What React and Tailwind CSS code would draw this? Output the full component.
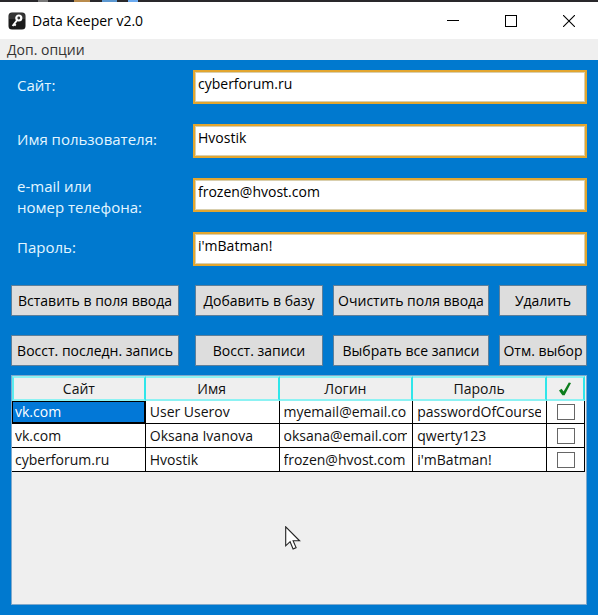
import { useState } from "react";

const fields = [
  { id: "site", label: ["Сайт:"], value: "cyberforum.ru" },
  { id: "user", label: ["Имя пользователя:"], value: "Hvostik" },
  { id: "contact", label: ["e-mail или", "номер телефона:"], value: "frozen@hvost.com" },
  { id: "password", label: ["Пароль:"], value: "i'mBatman!" },
];

const buttons = [
  "Вставить в поля ввода",
  "Добавить в базу",
  "Очистить поля ввода",
  "Удалить",
  "Восст. последн. запись",
  "Восст. записи",
  "Выбрать все записи",
  "Отм. выбор",
];

const rows = [
  ["vk.com", "User Userov", "myemail@email.com", "passwordOfCourse"],
  ["vk.com", "Oksana Ivanova", "oksana@email.com", "qwerty123"],
  ["cyberforum.ru", "Hvostik", "frozen@hvost.com", "i'mBatman!"],
];

function KeyLogo() {
  return (
    <svg className="size-[18px]" viewBox="0 0 18 18" aria-hidden="true">
      <rect x="0.5" y="0.5" width="17" height="17" rx="3.5" fill="#1b1b1b" />
      <path d="M1 4a3 3 0 0 1 3-3h10a3 3 0 0 1 3 3v3H1z" fill="#353535" />
      <circle cx="10.8" cy="6" r="2.5" fill="none" stroke="#fff" strokeWidth="2.2" />
      <path d="M9.2 8 4.6 14M5.4 11.6l2.4 1.9" fill="none" stroke="#fff" strokeWidth="2" />
    </svg>
  );
}

function TitleBar() {
  return (
    <header className="flex h-[37px] items-center bg-white pl-2 text-black">
      <KeyLogo />
      <h1 className="ml-[6px] flex-1 text-sm">Data Keeper v2.0</h1>
      <button type="button" aria-label="Свернуть" className="flex w-[58px] justify-center">
        <svg className="size-3" viewBox="0 0 12 12" shapeRendering="crispEdges">
          <path d="M0 5.5h12" stroke="#000" />
        </svg>
      </button>
      <button type="button" aria-label="Развернуть" className="flex w-[58px] justify-center">
        <svg className="size-3" viewBox="0 0 12 12" shapeRendering="crispEdges">
          <rect x="0.5" y="0.5" width="11" height="11" fill="none" stroke="#000" />
        </svg>
      </button>
      <button type="button" aria-label="Закрыть" className="flex w-[58px] justify-center">
        <svg className="size-3" viewBox="0 0 12 12">
          <path d="M0 0l12 12M12 0 0 12" stroke="#000" strokeWidth="1.1" />
        </svg>
      </button>
    </header>
  );
}

function Field({ id, label, value }) {
  return (
    <div className="flex h-[34px] items-center">
      <label
        htmlFor={id}
        className={
          label.length > 1
            ? "w-[182px] shrink-0 pl-[6px] pt-1 text-[15px] leading-[21px] text-[#e4f6ff]"
            : "w-[182px] shrink-0 pb-1 pl-[6px] text-[15px] leading-[21px] text-[#e4f6ff]"
        }
      >
        {label.map((line) => (
          <span key={line} className="block">{line}</span>
        ))}
      </label>
      <div className="h-full min-w-0 flex-1 border-2 border-[#e3a62f]">
        <input
          id={id}
          defaultValue={value}
          className="block h-full w-full border border-[#d9cfae] bg-white pb-2 pl-[2px] text-black outline-none"
        />
      </div>
    </div>
  );
}

function Records() {
  const [checked, setChecked] = useState([false, false, false]);
  const head =
    "border-y-2 border-r-2 border-y-[#8cf2f3] border-r-[#2fe6ea] bg-[#efefef] p-0 text-center font-normal first:border-l-2 first:border-l-[#5cecef]";
  return (
    <section className="min-h-[230px] flex-1 border border-[#7fa9cc] bg-[#efefef] pr-px">
      <table className="w-full table-fixed border-separate border-spacing-0 leading-5 text-[#111]">
        <colgroup>
          <col />
          <col />
          <col />
          <col />
          <col className="w-[38px]" />
        </colgroup>
        <thead>
          <tr className="h-[25px]">
            {["Сайт", "Имя", "Логин", "Пароль"].map((name) => (
              <th key={name} scope="col" className={head}>{name}</th>
            ))}
            <th scope="col" className={head}>
              <svg className="mx-auto h-[14px] w-3" viewBox="0 0 12 14" role="img" aria-label="Выбрано">
                <path d="M0 8.4 2.6 6.8 4.6 9.6 9.8 0.6 12 1 5.6 13.2 3.4 13.2z" fill="#0c7d1c" />
              </svg>
            </th>
          </tr>
        </thead>
        <tbody>
          {rows.map((row, r) => (
            <tr key={r} className={r === 0 ? "h-[23px]" : "h-6"}>
              {row.map((cell, c) => (
                <td
                  key={c}
                  className={
                    r === 0 && c === 0
                      ? "border-b-2 border-l border-r-2 border-t border-black bg-[#0278d7] p-0 pl-[2px] text-white"
                      : c === 0
                        ? "border-b border-r border-black bg-white p-0 pl-[3px] pr-[5px]"
                        : "border-b border-r border-black bg-white p-0 pl-1 pr-[5px]"
                  }
                >
                  <div className="overflow-hidden whitespace-nowrap">{cell}</div>
                </td>
              ))}
              <td className="border-b border-r border-black bg-white p-0">
                <input
                  type="checkbox"
                  aria-label={`Выбрать запись ${r + 1}`}
                  checked={checked[r]}
                  onChange={() => setChecked(checked.map((v, i) => (i === r ? !v : v)))}
                  className="mx-auto block h-4 w-[18px] appearance-none border border-[#666] bg-white checked:bg-[#0c7d1c]"
                />
              </td>
            </tr>
          ))}
        </tbody>
      </table>
    </section>
  );
}

export default function App() {
  return (
    <div className="relative flex min-h-screen flex-col bg-[#0079cf] font-['Open_Sans','Noto_Sans',sans-serif] text-sm">
      <div className="flex h-[2px] bg-[#29282b]">
        <div className="ml-[38px] h-full w-[10px] bg-[#777]" />
        <div className="ml-[26px] h-full w-4 bg-[#b98b4c]" />
        <div className="ml-3 h-full w-[15px] bg-[#5b97d0]" />
        <div className="ml-[11px] h-full w-[10px] bg-[#6aaaf0]" />
      </div>
      <TitleBar />
      <nav className="flex h-[21px] items-center bg-[#efefef] px-[7px]">
        <button type="button" className="text-[#333]">Доп. опции</button>
      </nav>
      <main className="flex flex-1 flex-col px-[11px] py-[10px]">
        <form className="flex flex-col gap-5" onSubmit={(e) => e.preventDefault()}>
          {fields.map((field) => (
            <Field key={field.id} {...field} />
          ))}
        </form>
        <div className="mb-[9px] mt-[19px] grid grid-cols-[174fr_128fr_156fr_88fr] gap-x-[10px] gap-y-[19px]">
          {buttons.map((name, i) => (
            <button
              key={name}
              type="button"
              className={
                i % 4 === 0
                  ? "mr-[6px] h-[31px] whitespace-nowrap border border-[#5d7f9a] bg-[#dddddd] text-black"
                  : "h-[31px] whitespace-nowrap border border-[#5d7f9a] bg-[#dddddd] text-black"
              }
            >
              {name}
            </button>
          ))}
        </div>
        <Records />
      </main>
      <svg className="pointer-events-none absolute left-[285px] top-[526px] h-6 w-4" viewBox="0 0 16 24" aria-hidden="true">
        <path d="M.7.8v19l4.4-4.1 3 7.2 3-1.3-3-6.8h6.5z" fill="#fff" stroke="#222" strokeWidth="1.1" />
      </svg>
    </div>
  );
}
